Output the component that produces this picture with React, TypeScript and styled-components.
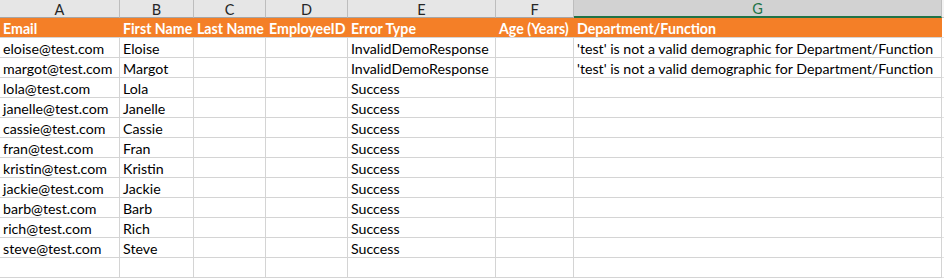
import React from 'react';
import styled, { createGlobalStyle } from 'styled-components';

const GlobalStyle = createGlobalStyle`
  html, body {
    margin: 0;
    padding: 0;
    background: #ffffff;
  }
  body {
    font-family: Lato, "Open Sans", "Liberation Sans", sans-serif;
  }
`;

// column widths include the 1px right grid line
const widths = [120, 74, 72, 82, 148, 78, 368];
const letters = ['A', 'B', 'C', 'D', 'E', 'F', 'G'];
const headers = [
  'Email',
  'First Name',
  'Last Name',
  'EmployeeID',
  'Error Type',
  'Age (Years)',
  'Department/Function',
];

const invalidMsg = "'test' is not a valid demographic for Department/Function";

const rows = [
  ['eloise@test.com', 'Eloise', '', '', 'InvalidDemoResponse', '', invalidMsg],
  ['margot@test.com', 'Margot', '', '', 'InvalidDemoResponse', '', invalidMsg],
  ['lola@test.com', 'Lola', '', '', 'Success', '', ''],
  ['janelle@test.com', 'Janelle', '', '', 'Success', '', ''],
  ['cassie@test.com', 'Cassie', '', '', 'Success', '', ''],
  ['fran@test.com', 'Fran', '', '', 'Success', '', ''],
  ['kristin@test.com', 'Kristin', '', '', 'Success', '', ''],
  ['jackie@test.com', 'Jackie', '', '', 'Success', '', ''],
  ['barb@test.com', 'Barb', '', '', 'Success', '', ''],
  ['rich@test.com', 'Rich', '', '', 'Success', '', ''],
  ['steve@test.com', 'Steve', '', '', 'Success', '', ''],
  ['', '', '', '', '', '', ''],
];

const Sheet = styled.div`
  width: 944px;
  height: 278px;
  overflow: hidden;
  background: #ffffff;
`;

const Grid = styled.div`
  display: grid;
  grid-template-columns: ${widths.map((w) => `${w}px`).join(' ')} 1fr;
`;

const ColHeader = styled.div<{ $selected?: boolean }>`
  display: flex;
  align-items: center;
  justify-content: center;
  font-family: Lato, "Open Sans", "Liberation Sans", sans-serif;
  font-size: 14.5px;
  line-height: 17px;
  padding-top: 1px;
  box-sizing: border-box;
  height: 18px;
  color: ${(p) => (p.$selected ? '#217346' : '#262626')};
  background: ${(p) => (p.$selected ? '#d2d2d2' : '#e6e6e6')};
  border-right: 1px solid #bdbdbd;
  border-bottom: ${(p) => (p.$selected ? '2px solid #217346' : '1px solid #a6a6a6')};
`;

const ColFiller = styled.div`
  height: 17px;
  background: #f3f3f3;
  border-bottom: 1px solid #c8c8c8;
`;

const HeadCell = styled.div`
  height: 19px;
  padding: 0 3px;
  display: flex;
  align-items: flex-end;
  background: #f47f27;
  color: #ffffff;
  font-weight: 700;
  font-size: 14.2px;
  line-height: 16px;
  white-space: nowrap;
  border-bottom: 1px solid #d4d4d4;
`;

const Cell = styled.div`
  height: 19px;
  padding: 0 3px;
  display: flex;
  align-items: flex-end;
  color: #000000;
  font-size: 14.2px;
  line-height: 16px;
  white-space: nowrap;
  border-right: 1px solid #d4d4d4;
  border-bottom: 1px solid #d4d4d4;
`;

const Filler = styled.div`
  height: 19px;
  border-bottom: 1px solid #e4e4e4;
`;

export default function App() {
  return (
    <Sheet>
      <GlobalStyle />
      <Grid>
        {letters.map((l) => (
          <ColHeader key={l} $selected={l === 'G'}>
            {l}
          </ColHeader>
        ))}
        <ColFiller />

        {headers.map((h) => (
          <HeadCell key={h}>{h}</HeadCell>
        ))}
        <Filler />

        {rows.map((r, i) => (
          <React.Fragment key={i}>
            {r.map((v, j) => (
              <Cell key={j}>{v}</Cell>
            ))}
            <Filler />
          </React.Fragment>
        ))}
      </Grid>
    </Sheet>
  );
}
